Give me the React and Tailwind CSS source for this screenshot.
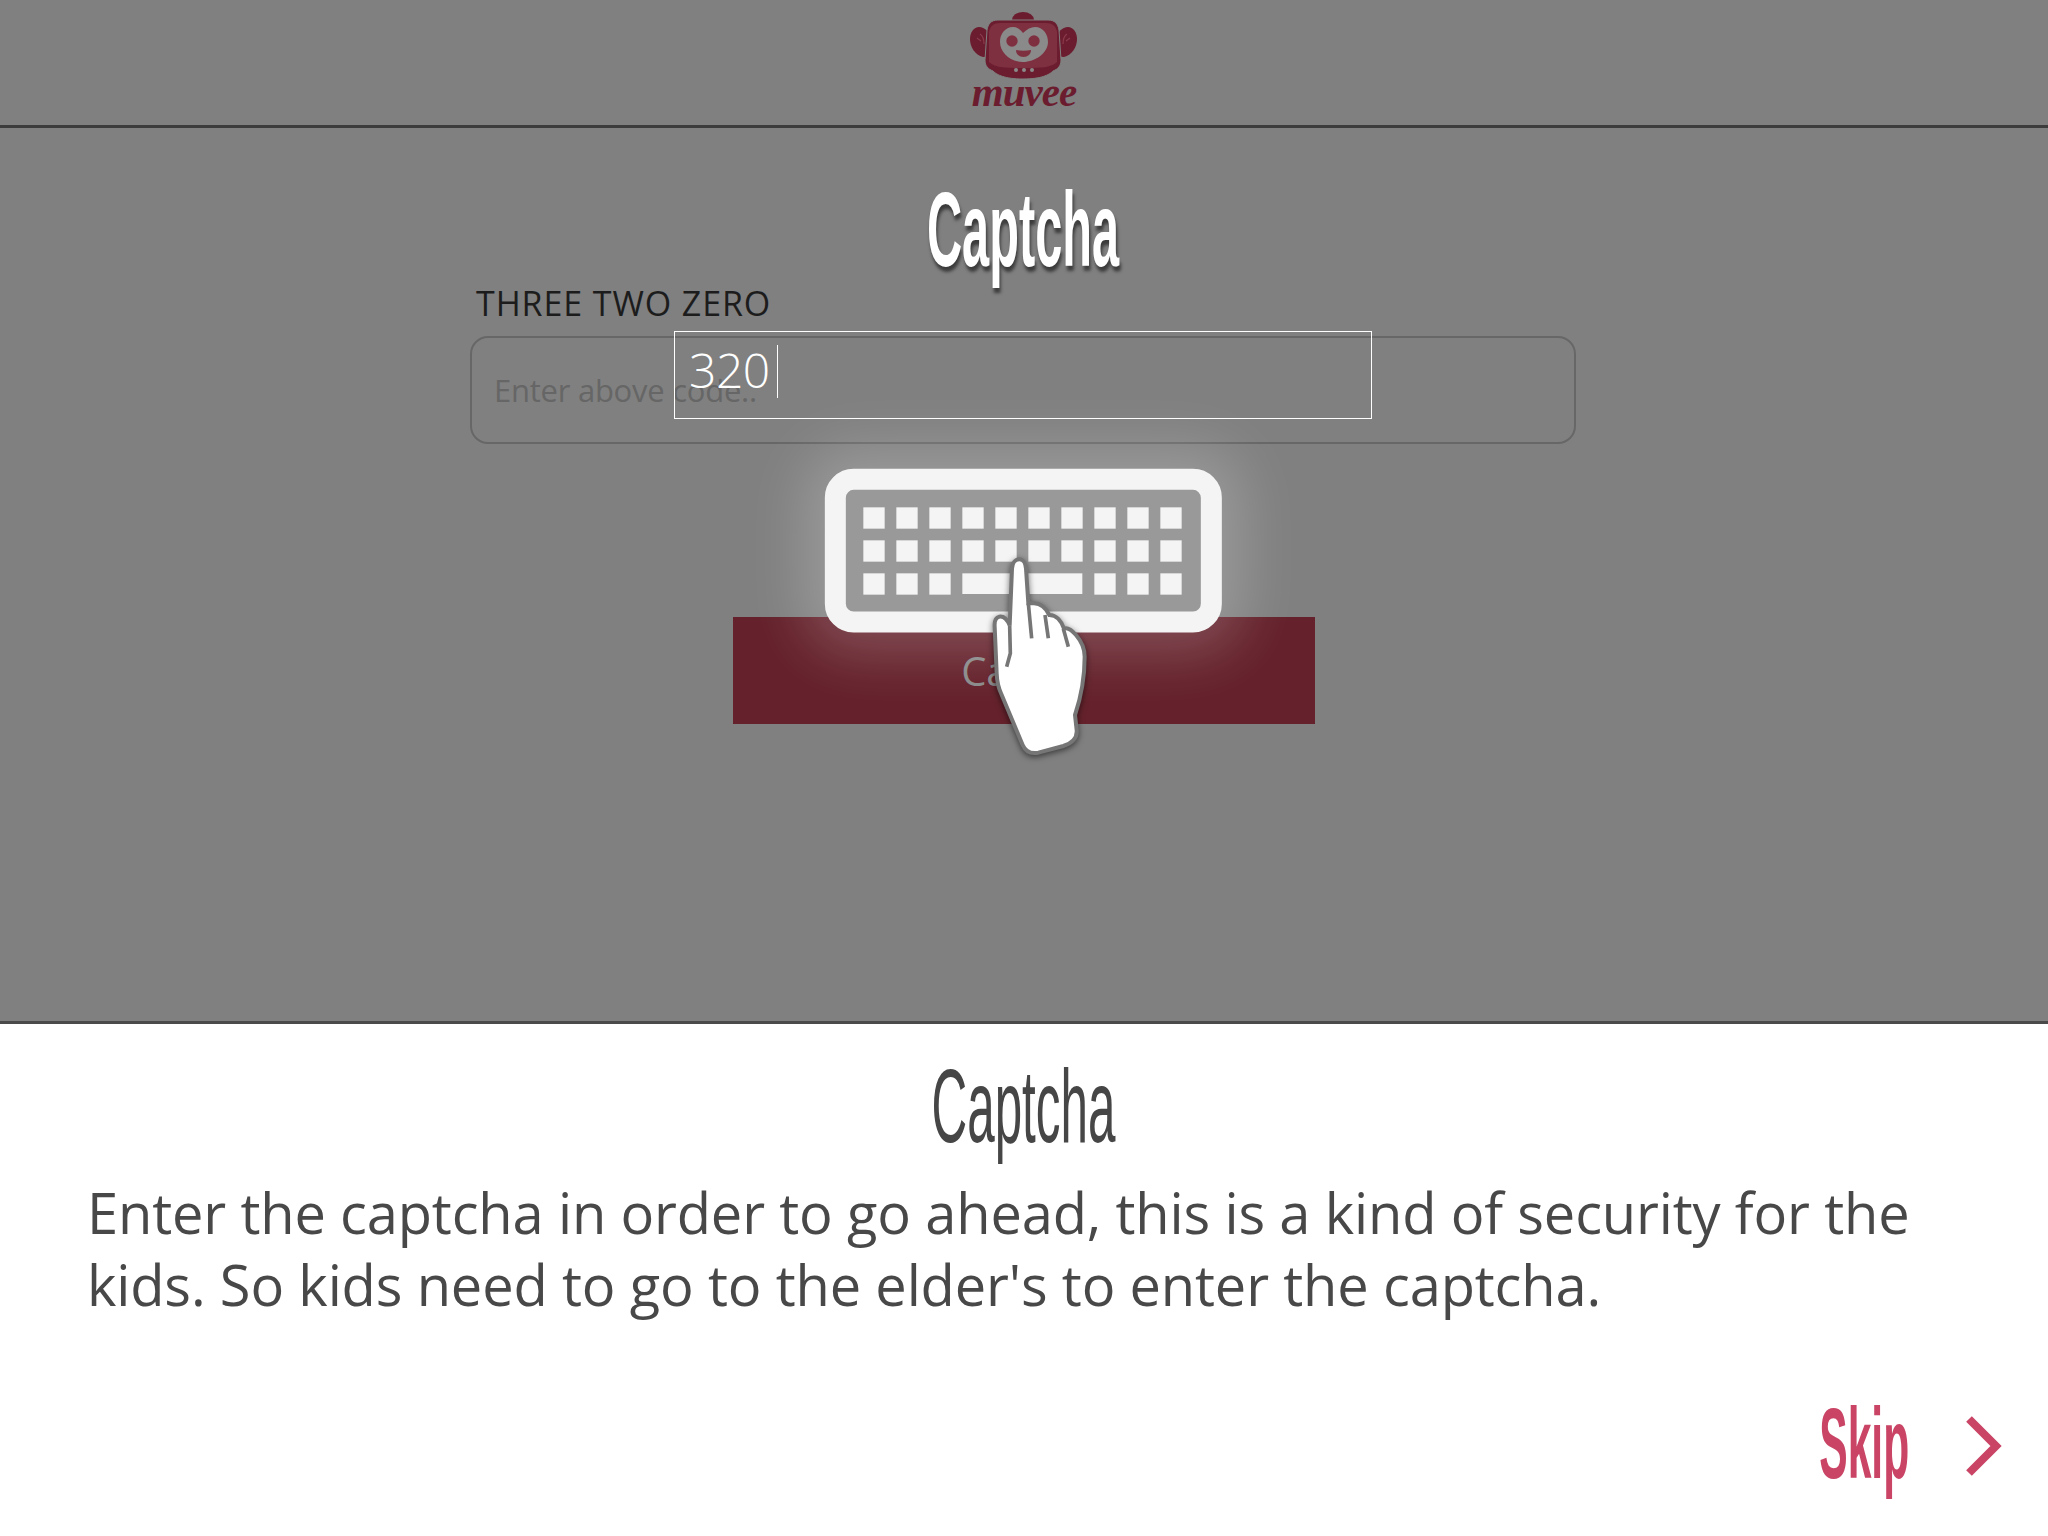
const sans = { fontFamily: '"Open Sans", "Noto Sans", sans-serif' };

function Logo() {
  return (
    <svg width="112" height="70" viewBox="968 10 112 70" className="block">
      <ellipse cx="1023" cy="20" rx="11" ry="8" fill="#6b1c2e" />
      <path d="M979 27c6 0 10 5 12 11l-2 14c-1 4-3 5-6 5-8-2-13-10-13-18 0-7 4-12 9-12z" fill="#6b1c2e" />
      <path d="M1068 27c-6 0-10 5-12 11l2 14c1 4 3 5 6 5 8-2 13-10 13-18 0-7-4-12-9-12z" fill="#6b1c2e" />
      <path d="M980 34c3 2 4 6 4 10M977 38l4 3M1067 34c-3 2-4 6-4 10M1070 38l-4 3" fill="none" stroke="#8a3a4a" strokeWidth="1.2" />
      <path d="M998 20h50c7 0 10 4 11 10l2 30c0 6-3 9-8 11-4 4-12 8-30 8s-26-4-30-8c-5-2-8-5-8-11l2-30c1-6 4-10 11-10z" fill="#6b1c2e" stroke="#808080" strokeWidth="1" />
      <path d="M1000 23h46c6 0 10 3 11 9v30c-6 5-12 6-34 6s-28-1-34-6V32c1-6 5-9 11-9z" fill="#7f3040" />
      <path d="M1023 33c4-4 8-6 12-6 8 0 13 7 13 15 0 11-13 20-25 20s-23-9-23-20c0-8 5-15 13-15 4 0 7 2 10 6z" fill="#8a8a8a" />
      <circle cx="1012" cy="41" r="5.7" fill="#7f3040" />
      <circle cx="1034" cy="41" r="5.7" fill="#7f3040" />
      <path d="M1016 50c5 1 10 1 15 0 0 4-3 7-7.500 7s-7.500-3-7.500-7z" fill="#7f3040" />
      <circle cx="1016" cy="70" r="2" fill="#8a8a8a" />
      <circle cx="1024" cy="70" r="2" fill="#8a8a8a" />
      <circle cx="1032" cy="70" r="2" fill="#8a8a8a" />
    </svg>
  );
}

function KeyboardHand() {
  const cols = [250, 349, 448, 547, 646, 745, 844, 943, 1042, 1141];
  const bottom = [250, 349, 448, 943, 1042, 1141];
  return (
    <svg width="480" height="330" viewBox="0 0 1440 990" className="block">
      <rect x="166" y="118" width="1128" height="428" rx="55" fill="none" stroke="#f4f4f4" strokeWidth="63" />
      {[202, 301].map(y => cols.map(x => <rect key={`${x}-${y}`} x={x} y={y} width="64" height="64" fill="#f4f4f4" />))}
      {bottom.map(x => <rect key={x} x={x} y="400" width="64" height="64" fill="#f4f4f4" />)}
      <rect x="547" y="400" width="360" height="62" fill="#f4f4f4" />
      <path
        className="drop-shadow-[0_6px_9px_rgba(0,0,0,0.55)]"
        d="M718 358C704 358 697 372 696 386L689 556C680 535 670 528 658 530C646 533 643 546 644 560L650 700C651 728 656 745 664 762L728 915C738 938 755 942 775 938L850 918C880 908 892 892 890 870L885 825C900 780 914 710 914 650C914 625 905 605 888 585C875 570 862 562 852 566C845 545 830 525 808 525C798 505 782 490 762 490L745 490L738 386C737 372 730 358 718 358Z"
        fill="#fff"
        stroke="#767676"
        strokeWidth="12"
      />
      <g fill="none" stroke="#767676" strokeWidth="11">
        <path d="M745 490l10 105" />
        <path d="M795 525l10 70" />
        <path d="M850 566l15 54" />
        <path d="M689 556l2 84-11 40" />
      </g>
    </svg>
  );
}

export default function App() {
  return (
    <div className="w-[2048px] h-[1536px] flex flex-col bg-white overflow-hidden" style={sans}>
      <div className="h-[1024px] bg-[#808080] border-b-[3px] border-[#4a4a4a] flex flex-col shrink-0">
        <header className="h-[128px] shrink-0 border-b-[3px] border-[#3c3c3c] flex flex-col items-center pt-[10px]">
          <Logo />
          <div className="-mt-[3px] text-[41px] leading-[30px] font-bold italic text-[#6b1c2e] tracking-[-1px] font-['Liberation_Serif',serif]">muvee</div>
        </header>

        <main className="relative flex-1">
          <h1 className="mt-[47px] -ml-[2px] text-center text-[105px] leading-[110px] font-bold text-white scale-x-[0.464] font-['Liberation_Sans',sans-serif] [text-shadow:3px_5px_5px_rgba(0,0,0,0.55)]">
            Captcha
          </h1>

          <div className="ml-[470px] w-[1106px] mt-[-4px]">
            <div className="pl-[6px] text-[34px] leading-[44px] text-[#1c1c1c] tracking-[0.9px]">THREE TWO ZERO</div>
            <div className="mt-[11px] h-[108px] rounded-[18px] border-2 border-[#676767] flex items-center px-[22px]">
              <span className="text-[31px] text-[#666666] tracking-[-0.25px]">Enter above code..</span>
            </div>
          </div>

          <button className="block mx-auto mt-[173px] w-[582px] h-[107px] bg-[#65222c] text-[40px] text-[#8a8a8a] pr-[2px]">Cancel</button>

          <div className="absolute left-[674px] top-[203px] w-[698px] h-[88px] border border-white flex items-center pl-[14px] pb-[8px]">
            <span className="text-[48px] font-light text-white tracking-[-0.5px] -mt-[2px]">320</span>
            <span className="ml-[7px] w-px h-[53px] bg-white" />
          </div>

          {/* keyboard hint */}
          <div className="absolute left-[825px] top-[341px] w-[397px] h-[163px] rounded-[28px] bg-white/20 shadow-[0_0_55px_22px_rgba(255,255,255,0.2)]" />
          <div className="absolute left-[780px] top-[312px]">
            <KeyboardHand />
          </div>
        </main>
      </div>

      <section className="flex-1 relative">
        <h2 className="mt-[27px] -ml-[1px] text-center text-[104px] leading-[110px] text-[#464646] scale-x-[0.475] font-['Liberation_Sans',sans-serif]">
          Captcha
        </h2>
        <p className="mt-[15px] px-[87px] text-[56px] leading-[72px] text-[#484848] tracking-[-0.15px]">
          Enter the captcha in order to go ahead, this is a kind of security for the
          <br />
          kids. So kids need to go to the elder's to enter the captcha.
        </p>
        <div className="absolute right-[46px] bottom-[37px] flex items-center">
          <span className="text-[100px] leading-[100px] text-[#c94465] scale-x-[0.426] font-bold origin-right mr-[57px] mb-[6px] font-['Liberation_Sans',sans-serif]">Skip</span>
          <svg width="36" height="60" viewBox="0 0 36 60">
            <path d="M3 3l27 27L3 57" fill="none" stroke="#c94465" strokeWidth="8" />
          </svg>
        </div>
      </section>
    </div>
  );
}
